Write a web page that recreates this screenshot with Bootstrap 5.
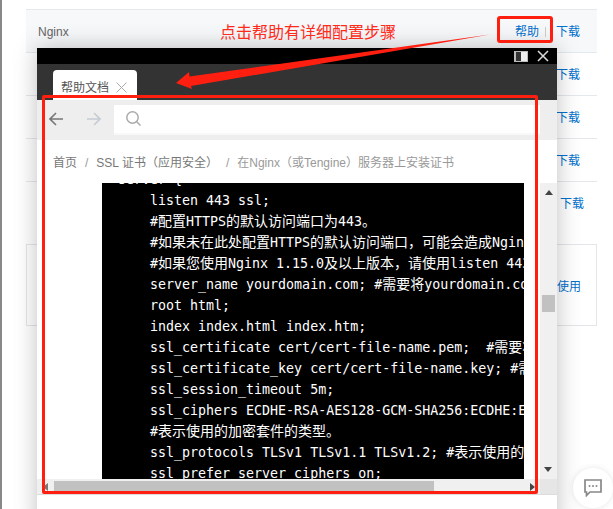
<!DOCTYPE html>
<html lang="zh"><head><meta charset="utf-8">
<link href="https://cdn.jsdelivr.net/npm/bootstrap@5.3.0/dist/css/bootstrap.min.css" rel="stylesheet">
<style>
html,body{height:509px;overflow:hidden}
body{font-family:"Liberation Sans","Noto Sans CJK SC",sans-serif;font-size:12px;color:#666;background:#fff;position:relative}
.edge{position:absolute;left:0;top:0;bottom:0;width:2px;background:#888}
.base{padding:9px 16px 0 26px}
.trow{height:43px;border-top:1px solid #e5e8ec;padding:2px 17px 0 12px}
.trow.hl{background:#f7f8fa}
.dl{color:#0070cc;font-size:12px}
.dl-shift{margin-right:-4px}
.sep{width:1px;height:10px;background:#ccc;margin:0 10px 0 6px}
.usebox{margin-top:20px;height:82px;border:1px solid #e3e5e8;padding:4px 15px 0 12px}
.note{position:absolute;left:220px;top:23px;color:#ff2a1a;font-size:16px;line-height:20px}
.helpbox{position:absolute;left:497px;top:16px;width:56px;height:27px;border:3px solid #ff1f10;border-radius:3px}
.win{position:absolute;left:37px;top:48px;width:520px;height:480px;background:#fff;box-shadow:0 0 22px rgba(0,0,0,.25)}
.tbar{height:16px;background:#000;padding-right:8px;gap:9px}
.tabbar{height:36px;background:#333;padding:6px 0 0 16px}
.tabx{width:84px;height:30px;background:#fff;border-radius:4px 4px 0 0;padding:5px 0 0 8px;font-size:12px;color:#555;gap:7px}
.tools{height:40px;background:#eee;padding:5px 0 0 12px}
.navico{margin-top:7px}
.navico2{margin-left:24px}
.addr{width:426px;height:30px;background:#fff;border-bottom:2px solid #f8f8f8;margin-left:13px;padding:0 0 2px 12px}
.crumb{height:43px;padding:15px 0 0 16px;color:#999;font-size:12px;line-height:16px;white-space:nowrap}
.crumb .d1{color:#777}
.crumb i{font-style:normal;margin:0 8px}
.docarea{height:311px;position:relative}
.codewrap{position:absolute;left:65px;top:0;width:422px;height:296px;background:#000;overflow:hidden}
.codeline{font-family:"DejaVu Sans Mono","Noto Sans CJK SC",monospace;font-size:13.3px;line-height:21px;color:#fff;white-space:pre;padding-left:16px;margin-top:-14px}
.zh{font-size:14px;line-height:1;font-family:"Noto Sans CJK SC",sans-serif}
.vs{position:absolute;left:503px;top:0;width:17px;height:296px;background:#f0f0f0}
.vthumb{position:absolute;left:2px;top:112px;width:13px;height:17px;background:#c1c1c1}
.vup{margin-top:7px}
.vdown{left:4px;top:284px}
.hs{position:absolute;left:0;top:296px;width:520px;height:16px;background:#f0f0f0;border-bottom:1px solid #ddd}
.hthumb{position:absolute;left:17px;top:2px;width:380px;height:10px;background:#c1c1c1}
.hcorner{position:absolute;left:503px;top:0;width:17px;height:15px;background:#e6e6e6}
.hright{left:493px;top:4px}
.hleft{left:6px;top:4px}
.redbox{position:absolute;left:42px;top:95px;width:496px;height:399px;border:3px solid #ff1f10;border-radius:2px;pointer-events:none}
.arrow{position:absolute;left:0;top:0}
.chat{position:absolute;left:573px;top:468px;width:40px;height:40px;border-radius:50%;background:#fff;box-shadow:0 0 6px rgba(0,0,0,.1)}
</style></head><body>
<div class="edge"></div>
<div class="base">
 <div class="trow hl d-flex align-items-center justify-content-between"><span>Nginx</span><span class="d-flex align-items-center"><span class="dl">帮助</span><span class="sep"></span><a class="dl text-decoration-none" href="#">下载</a></span></div>
 <div class="trow d-flex align-items-center justify-content-end"><a class="dl text-decoration-none" href="#">下载</a></div>
 <div class="trow d-flex align-items-center justify-content-end"><a class="dl text-decoration-none" href="#">下载</a></div>
 <div class="trow d-flex align-items-center justify-content-end"><a class="dl text-decoration-none" href="#">下载</a></div>
 <div class="trow d-flex align-items-center justify-content-end"><a class="dl dl-shift text-decoration-none" href="#">下载</a></div>
 <div class="usebox d-flex align-items-center justify-content-end"><a class="dl text-decoration-none" href="#">使用</a></div>
</div>
<div class="win">
 <div class="tbar d-flex justify-content-end align-items-center">
  <svg width="14" height="11" viewBox="0 0 14 11"><rect width="14" height="11" fill="#bbb"/><rect x="2" y="1" width="5" height="9" fill="#333"/><rect x="7" y="1" width="6" height="9" fill="#eee"/></svg>
  <svg width="12" height="12" viewBox="0 0 12 12"><path d="M1 1l10 10M11 1L1 11" stroke="#ddd" stroke-width="1.5"/></svg>
 </div>
 <div class="tabbar"><div class="tabx d-flex align-items-center"><span>帮助文档</span><svg width="11" height="11" viewBox="0 0 11 11"><path d="M.5.5l10 10M10.5.5l-10 10" stroke="#aaa" stroke-width="1"/></svg></div></div>
 <div class="tools d-flex">
  <svg class="navico" width="14" height="14" viewBox="0 0 14 14"><path d="M14 7H1M7 1L1 7l6 6" fill="none" stroke="#777" stroke-width="1.600"/></svg>
  <svg class="navico navico2" width="14" height="14" viewBox="0 0 14 14"><path d="M0 7h13M7 1l6 6-6 6" fill="none" stroke="#c5ccd3" stroke-width="1.600"/></svg>
  <div class="addr d-flex align-items-center"><svg width="15" height="15" viewBox="0 0 15 15"><circle cx="6.500" cy="6.500" r="5.700" fill="none" stroke="#aaa" stroke-width="1.500"/><path d="M10.500 10.500l4 4" stroke="#aaa" stroke-width="1.500"/></svg></div>
 </div>
 <div class="crumb"><span class="d1">首页</span><i>/</i><span class="d1">SSL 证书（应用安全）</span><i>/</i>在Nginx（或Tengine）服务器上安装证书</div>
 <div class="docarea">
  <div class="codewrap"><div class="codeline">server {
    listen 443 ssl;
    #<span class="zh">配置</span>HTTPS<span class="zh">的默认访问端口为</span>443<span class="zh">。</span>
    #<span class="zh">如果未在此处配置</span>HTTPS<span class="zh">的默认访问端口，可能会造成</span>Nginx
    #<span class="zh">如果您使用</span>Nginx 1.15.0<span class="zh">及以上版本，请使用</span>listen 443
    server_name yourdomain.com; #<span class="zh">需要将</span>yourdomain.com
    root html;
    index index.html index.htm;
    ssl_certificate cert/cert-file-name.pem;  #<span class="zh">需要将</span>
    ssl_certificate_key cert/cert-file-name.key; #<span class="zh">需要</span>
    ssl_session_timeout 5m;
    ssl_ciphers ECDHE-RSA-AES128-GCM-SHA256:ECDHE:ECDH
    #<span class="zh">表示使用的加密套件的类型。</span>
    ssl_protocols TLSv1 TLSv1.1 TLSv1.2; #<span class="zh">表示使用的</span>
    ssl_prefer_server_ciphers on;</div></div>
  <div class="vs"><svg class="d-block mx-auto vup" width="8" height="5" viewBox="0 0 8 5"><path d="M4 0l4 5H0z" fill="#444"/></svg><div class="vthumb"></div><svg class="position-absolute vdown" width="8" height="5" viewBox="0 0 8 5"><path d="M4 5L0 0h8z" fill="#444"/></svg></div>
  <div class="hs"><div class="hthumb"></div><div class="hcorner"></div><svg class="position-absolute hright" width="5" height="8" viewBox="0 0 5 8"><path d="M5 4L0 8V0z" fill="#444"/></svg><svg class="position-absolute hleft" width="5" height="8" viewBox="0 0 5 8"><path d="M0 4l5-4v8z" fill="#777"/></svg></div>
 </div>
</div>
<div class="redbox"></div>
<div class="note">点击帮助有详细配置步骤</div>
<div class="helpbox"></div>
<svg class="arrow" width="613" height="120" viewBox="0 0 613 120"><path d="M490 34.500L189.500 76.500 189 72 176 83 192 89 191 86z" fill="#ff1f10"/></svg>
<div class="chat d-flex align-items-center justify-content-center"><svg width="18" height="18" viewBox="0 0 18 18"><path d="M1 1h16v12H6l-3.500 3.500V13H1z" fill="none" stroke="#888" stroke-width="1.700"/><circle cx="5.500" cy="7" r="1" fill="#888"/><circle cx="9" cy="7" r="1" fill="#888"/><circle cx="12.500" cy="7" r="1" fill="#888"/></svg></div>
<script src="https://cdn.jsdelivr.net/npm/bootstrap@5.3.0/dist/js/bootstrap.bundle.min.js"></script>
</body></html>
